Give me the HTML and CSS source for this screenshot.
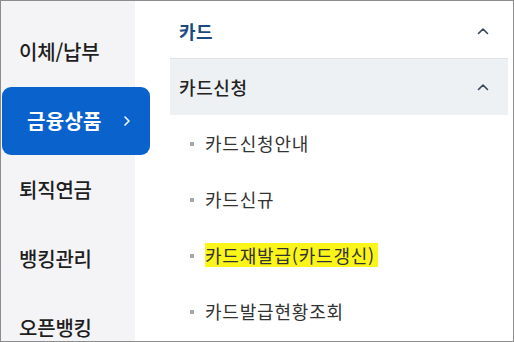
FILE: index.html
```html
<!DOCTYPE html>
<html lang="ko">
  <head>
    <meta charset="UTF-8" />
    <meta name="viewport" content="width=device-width, initial-scale=1.0" />
    <title>전체메뉴</title>
    <link rel="stylesheet" href="styles.css">
  </head>

  <body>
    <div class="menu-frame">
      <nav class="side-nav">
        <a class="side-item">이체/납부</a>
        <a class="side-item active">
          <span>금융상품</span>
          <svg class="arrow-right" width="6" height="10" viewBox="0 0 6 10">
            <path d="M1 1 L5 5 L1 9" fill="none" stroke="#fff" stroke-width="1.6" stroke-linecap="round" stroke-linejoin="round" />
          </svg>
        </a>
        <a class="side-item">퇴직연금</a>
        <a class="side-item">뱅킹관리</a>
        <a class="side-item">오픈뱅킹</a>
      </nav>

      <div class="sub-menu">
        <div class="group-title">
          <span>카드</span>
          <svg class="caret" width="12" height="8" viewBox="0 0 12 8">
            <path d="M1.5 6.5 L6 2 L10.5 6.5" fill="none" stroke="#34475c" stroke-width="1.6" stroke-linecap="round" stroke-linejoin="round" />
          </svg>
        </div>
        <div class="sub-title">
          <span>카드신청</span>
          <svg class="caret" width="12" height="8" viewBox="0 0 12 8">
            <path d="M1.5 6.5 L6 2 L10.5 6.5" fill="none" stroke="#34475c" stroke-width="1.6" stroke-linecap="round" stroke-linejoin="round" />
          </svg>
        </div>
        <ul class="link-list">
          <li>카드신청안내</li>
          <li>카드신규</li>
          <li><mark>카드재발급(카드갱신)</mark></li>
          <li>카드발급현황조회</li>
        </ul>
      </div>
    </div>
  </body>
</html>
```

FILE: styles.css
```css
html, body {
  margin: 0;
  padding: 0;
}

body {
  font-family: "Noto Sans CJK KR", "Noto Sans", sans-serif;
  background: #fff;
}

.menu-frame {
  box-sizing: border-box;
  width: 514px;
  height: 342px;
  border: 1px solid #8c8c8c;
  display: flex;
  overflow: hidden;
}

/* left column */
.side-nav {
  width: 134px;
  flex-shrink: 0;
  background: #f4f4f6;
  padding-top: 17px;
  display: flex;
  flex-direction: column;
  gap: 1px;
}

.side-item {
  height: 68px;
  flex-shrink: 0;
  display: flex;
  align-items: center;
  padding-left: 18px;
  font-size: 20px;
  font-weight: 500;
  color: #1e1e1e;
  line-height: 1;
  letter-spacing: -0.2px;
}

.side-item.active {
  width: 148px;
  margin-left: 1px;
  box-sizing: border-box;
  padding-left: 25px;
  background: #0a63cc;
  color: #fff;
  font-weight: 700;
  letter-spacing: 0.3px;
  border-radius: 9px;
  position: relative;
  z-index: 1;
}

.arrow-right {
  margin-left: 22px;
}

/* right column */
.sub-menu {
  margin-left: 35px;
  width: 338px;
  flex-shrink: 0;
}

.group-title {
  height: 55px;
  border-bottom: 1px solid #dfe3e7;
  display: flex;
  align-items: center;
  justify-content: space-between;
  padding: 2px 19px 0 9px;
  font-size: 18px;
  font-weight: 700;
  color: #1b4a80;
  line-height: 1;
  letter-spacing: 0.5px;
}

.sub-title {
  height: 56px;
  background: #eef1f4;
  display: flex;
  align-items: center;
  justify-content: space-between;
  padding: 0 19px 0 9px;
  font-size: 18px;
  font-weight: 500;
  color: #222;
  line-height: 1;
  letter-spacing: 0.6px;
}

.caret {
  display: block;
}

.link-list {
  list-style: none;
  margin: 0;
  padding: 0;
}

.link-list li {
  height: 56px;
  display: flex;
  align-items: center;
  padding-left: 35px;
  font-size: 18px;
  color: #333;
  line-height: 1;
  letter-spacing: 0.8px;
  position: relative;
}

.link-list li::before {
  content: "";
  position: absolute;
  left: 20px;
  top: 27px;
  width: 4px;
  height: 4px;
  background: #a3a6aa;
}

mark {
  background: #fbf51a;
  color: #333;
  padding: 3px 3px 3px 0;
}
```
